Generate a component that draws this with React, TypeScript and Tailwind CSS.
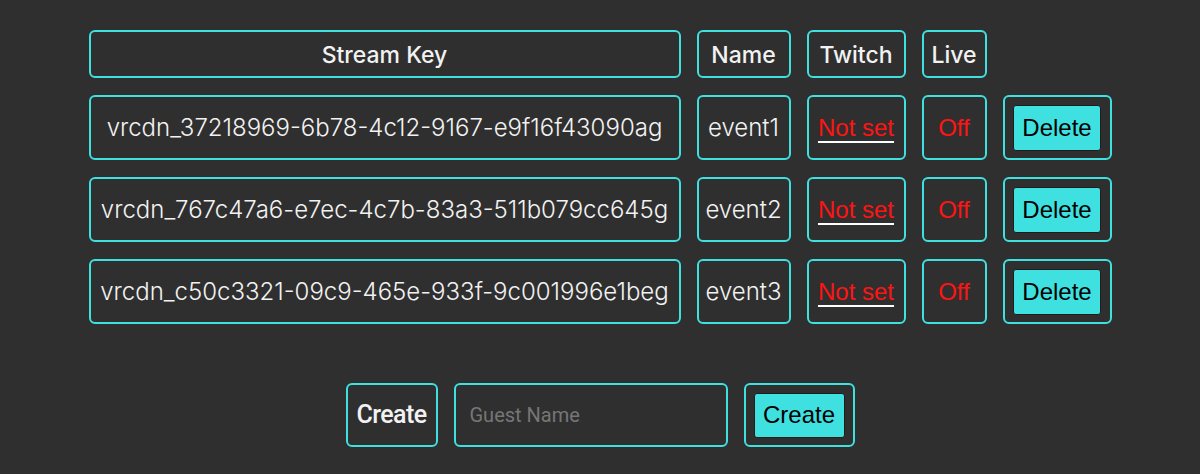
import React from 'react';

type StreamRow = { key: string; name: string };

const rows: StreamRow[] = [
  { key: 'vrcdn_37218969-6b78-4c12-9167-e9f16f43090ag', name: 'event1' },
  { key: 'vrcdn_767c47a6-e7ec-4c7b-83a3-511b079cc645g', name: 'event2' },
  { key: 'vrcdn_c50c3321-09c9-465e-933f-9c001996e1beg', name: 'event3' },
];

const cell = 'border-2 border-[#3fe0e0] rounded-md text-center whitespace-nowrap p-0';
const arial = { fontFamily: '"Liberation Sans", Arial, sans-serif' };

export default function App() {
  return (
    <div
      className="min-h-screen w-full bg-[#2f2f2f] text-[#f2f2f2] flex flex-col items-center pt-[14px]"
      style={{ fontFamily: 'Inter, "Noto Sans", sans-serif' }}
    >
      <table className="border-separate border-spacing-x-4 border-spacing-y-[17px] -mt-[1px]">
        <thead>
          <tr>
            <th className={`${cell} w-[592px] h-[48px] pt-[3px] text-[23px] font-medium`}>Stream Key</th>
            <th className={`${cell} w-[94px] h-[48px] pt-[3px] text-[23px] font-medium`}>Name</th>
            <th className={`${cell} w-[99px] h-[48px] pt-[3px] text-[23px] font-medium`}>Twitch</th>
            <th className={`${cell} w-[65px] h-[48px] pt-[3px] text-[23px] font-medium`}>Live</th>
          </tr>
        </thead>
        <tbody>
          {rows.map((r) => (
            <tr key={r.key}>
              <td className={`${cell} h-[65px] text-[24px] font-light`}>{r.key}</td>
              <td className={`${cell} h-[65px] text-[24px] font-light`}>{r.name}</td>
              <td className={`${cell} h-[65px] text-[24px]`}>
                <a
                  href="#"
                  className="text-[#ff1414] underline decoration-white decoration-2 underline-offset-[5px]"
                  style={arial}
                >
                  Not set
                </a>
              </td>
              <td className={`${cell} h-[65px] text-[24px] text-[#ff1414]`} style={arial}>
                Off
              </td>
              <td className={`${cell} w-[109px] h-[65px]`}>
                <div className="flex justify-center">
                  <button
                    className="bg-[#3fe0e0] text-black text-[24px] w-[88px] h-[46px] rounded-[3px] border border-[#1e1e1e]"
                    style={arial}
                  >
                    Delete
                  </button>
                </div>
              </td>
            </tr>
          ))}
        </tbody>
      </table>

      <div className="flex items-stretch gap-4 mt-[42px]">
        <div
          className="border-2 border-[#3fe0e0] rounded-md h-[64px] w-[92px] flex items-center justify-center text-[25px] font-medium tracking-[-0.6px]"
          style={{ fontFamily: 'Roboto, "Liberation Sans", sans-serif' }}
        >
          Create
        </div>
        <input
          placeholder="Guest Name"
          className="border-2 border-[#3fe0e0] rounded-md h-[64px] w-[274px] bg-transparent px-3.5 text-[20px] text-white placeholder:text-[#767676] outline-none"
          style={{ fontFamily: 'Roboto, "Liberation Sans", sans-serif' }}
        />
        <div className="border-2 border-[#3fe0e0] rounded-md h-[64px] w-[111px] flex items-center justify-center">
          <button
            className="bg-[#3fe0e0] text-black text-[24px] w-[91px] h-[45px] rounded-[3px] border border-[#1e1e1e]"
            style={arial}
          >
            Create
          </button>
        </div>
      </div>
    </div>
  );
}
